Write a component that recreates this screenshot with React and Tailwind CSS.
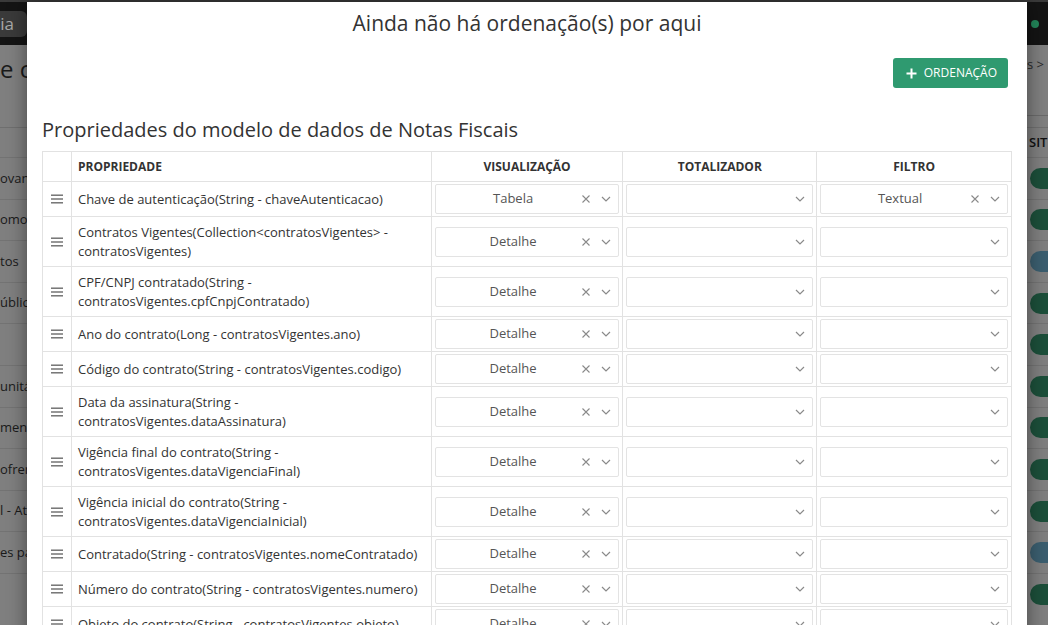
import React from 'react';

const rows = [
  { label: 'Chave de autenticação(String - chaveAutenticacao)', vis: 'Tabela', filtro: 'Textual' },
  { label: 'Contratos Vigentes(Collection<contratosVigentes> - contratosVigentes)', vis: 'Detalhe' },
  { label: 'CPF/CNPJ contratado(String - contratosVigentes.cpfCnpjContratado)', vis: 'Detalhe' },
  { label: 'Ano do contrato(Long - contratosVigentes.ano)', vis: 'Detalhe' },
  { label: 'Código do contrato(String - contratosVigentes.codigo)', vis: 'Detalhe' },
  { label: 'Data da assinatura(String - contratosVigentes.dataAssinatura)', vis: 'Detalhe' },
  { label: 'Vigência final do contrato(String - contratosVigentes.dataVigenciaFinal)', vis: 'Detalhe' },
  { label: 'Vigência inicial do contrato(String - contratosVigentes.dataVigenciaInicial)', vis: 'Detalhe' },
  { label: 'Contratado(String - contratosVigentes.nomeContratado)', vis: 'Detalhe' },
  { label: 'Número do contrato(String - contratosVigentes.numero)', vis: 'Detalhe' },
  { label: 'Objeto do contrato(String - contratosVigentes.objeto)', vis: 'Detalhe' },
];

const bgLeft = ['ovantes', 'omoção', 'tos', 'úblicos', '', 'unitário', 'mentos', 'ofrer', 'l - Atual', 'es pagos', ''];
const bgPills = ['green', 'green', 'blue', 'green', 'green', 'green', 'green', 'green', 'green', 'blue', 'green'];

const Handle = () => (
  <svg width="12" height="10" viewBox="0 0 12 10" className="mx-auto">
    <rect x="0" y="0.5" width="12" height="1.4" fill="#6b6b6b" />
    <rect x="0" y="4.3" width="12" height="1.4" fill="#6b6b6b" />
    <rect x="0" y="8.1" width="12" height="1.4" fill="#6b6b6b" />
  </svg>
);

const Chevron = () => (
  <svg width="10" height="6" viewBox="0 0 10 6">
    <path d="M1 1l4 4 4-4" fill="none" stroke="#8a8a8a" strokeWidth="1.2" />
  </svg>
);

const Clear = () => (
  <svg width="8" height="8" viewBox="0 0 8 8">
    <path d="M0.5 0.5l7 7M7.5 0.5l-7 7" fill="none" stroke="#8a8a8a" strokeWidth="1.1" />
  </svg>
);

const Select = ({ value }) => (
  <div className="flex h-[30px] items-center rounded-[2px] border border-[#e3e3e3] bg-white">
    <span className="flex-1 pl-[12px] text-center text-[13px] text-[#555]">{value}</span>
    {value && (
      <span className="flex w-[16px] justify-center">
        <Clear />
      </span>
    )}
    <span className="flex w-[24px] justify-center">
      <Chevron />
    </span>
  </div>
);

export default function App() {
  return (
    <div className="relative h-[625px] w-[1048px] overflow-hidden bg-[#7f7f7f] font-['Open_Sans',sans-serif]">
      {/* dimmed page behind the modal */}
      <div className="flex h-full flex-col">
        <div className="h-[2px] bg-[#3a3a3a]" />
        <div className="flex h-[43px] items-center justify-between bg-[#141414]">
          <div className="flex w-[27px] justify-end">
            <div className="flex h-[26px] shrink-0 items-center whitespace-nowrap rounded-[6px] bg-[#3a3a3a] pl-[10px] pr-[13px] text-[17px] text-[#a9a9a9]">
              Ocorrência
            </div>
          </div>
          <div className="mr-[9px] h-[8px] w-[8px] rounded-full bg-[#23865a]" />
        </div>
        <div className="flex h-[82px] items-start justify-between">
          <div className="mt-[6px] whitespace-nowrap text-[24px] text-[#1a1a1a]">e controle</div>
          <div className="flex h-full flex-col items-end">
            <div className="mr-[4px] mt-[10px] whitespace-nowrap text-[13px] text-[#2a2a2a]">itens &gt;</div>
            <div className="mt-auto mb-[11px] h-px w-[21px] bg-[#6a6a6a]" />
          </div>
        </div>
        <div className="flex h-[30px] items-center justify-end border-t border-[#6f6f6f]">
          <span className="w-[19px] overflow-hidden whitespace-nowrap text-[13px] font-semibold text-[#111]">SITUAÇÃO</span>
        </div>
        {bgLeft.map((t, i) => (
          <div key={i} className="flex h-[41.6px] shrink-0 items-center justify-between border-t border-[#737373]">
            <span className="whitespace-nowrap text-[13px] text-[#1a1a1a]">{t}</span>
            <span
              className={`mr-[-12px] h-[21px] w-[30px] rounded-full ${
                bgPills[i] === 'blue' ? 'bg-[#3b5e6f]' : 'bg-[#1c4f3a]'
              }`}
            />
          </div>
        ))}
      </div>

      {/* modal */}
      <div className="absolute left-[27px] top-[2px] w-[1000px] bg-white px-[15px] shadow-[0_0_18px_rgba(0,0,0,0.45)]">
        <h2 className="pt-[6px] text-center text-[21px] leading-[30px] text-[#333]">
          Ainda não há ordenação(s) por aqui
        </h2>
        <div className="mt-[20px] flex justify-end pr-[4px]">
          <button className="flex h-[30px] items-center gap-[7px] rounded-[3px] bg-[#2f9a70] pl-[13px] pr-[11px] text-[12px] font-medium text-white">
            <svg width="11" height="11" viewBox="0 0 11 11">
              <path d="M5.5 0.5v10M0.5 5.5h10" stroke="white" strokeWidth="2" />
            </svg>
            ORDENAÇÃO
          </button>
        </div>
        <h3 className="mt-[28px] mb-[7px] text-[20px] leading-[28px] text-[#333]">
          Propriedades do modelo de dados de Notas Fiscais
        </h3>
        <table className="w-full border-collapse text-[13px] text-[#333]">
          <colgroup>
            <col className="w-[29px]" />
            <col className="w-[360px]" />
            <col className="w-[192px]" />
            <col className="w-[194px]" />
            <col className="w-[195px]" />
          </colgroup>
          <thead>
            <tr className="h-[30px] text-[12px] font-semibold">
              <th className="border border-[#e2e2e2]" />
              <th className="border border-[#e2e2e2] px-[6px] text-left">PROPRIEDADE</th>
              <th className="border border-[#e2e2e2] text-center">VISUALIZAÇÃO</th>
              <th className="border border-[#e2e2e2] text-center">TOTALIZADOR</th>
              <th className="border border-[#e2e2e2] text-center">FILTRO</th>
            </tr>
          </thead>
          <tbody>
            {rows.map((r, i) => (
              <tr key={i}>
                <td className="border border-[#e2e2e2] align-middle">
                  <Handle />
                </td>
                <td className="border border-[#e2e2e2] px-[6px] py-[5.5px] leading-[19px]">{r.label}</td>
                <td className="border border-[#e2e2e2] px-[3px] py-[2px]">
                  <Select value={r.vis} />
                </td>
                <td className="border border-[#e2e2e2] px-[3px] py-[2px]">
                  <Select />
                </td>
                <td className="border border-[#e2e2e2] px-[3px] py-[2px]">
                  <Select value={r.filtro} />
                </td>
              </tr>
            ))}
          </tbody>
        </table>
      </div>
    </div>
  );
}
